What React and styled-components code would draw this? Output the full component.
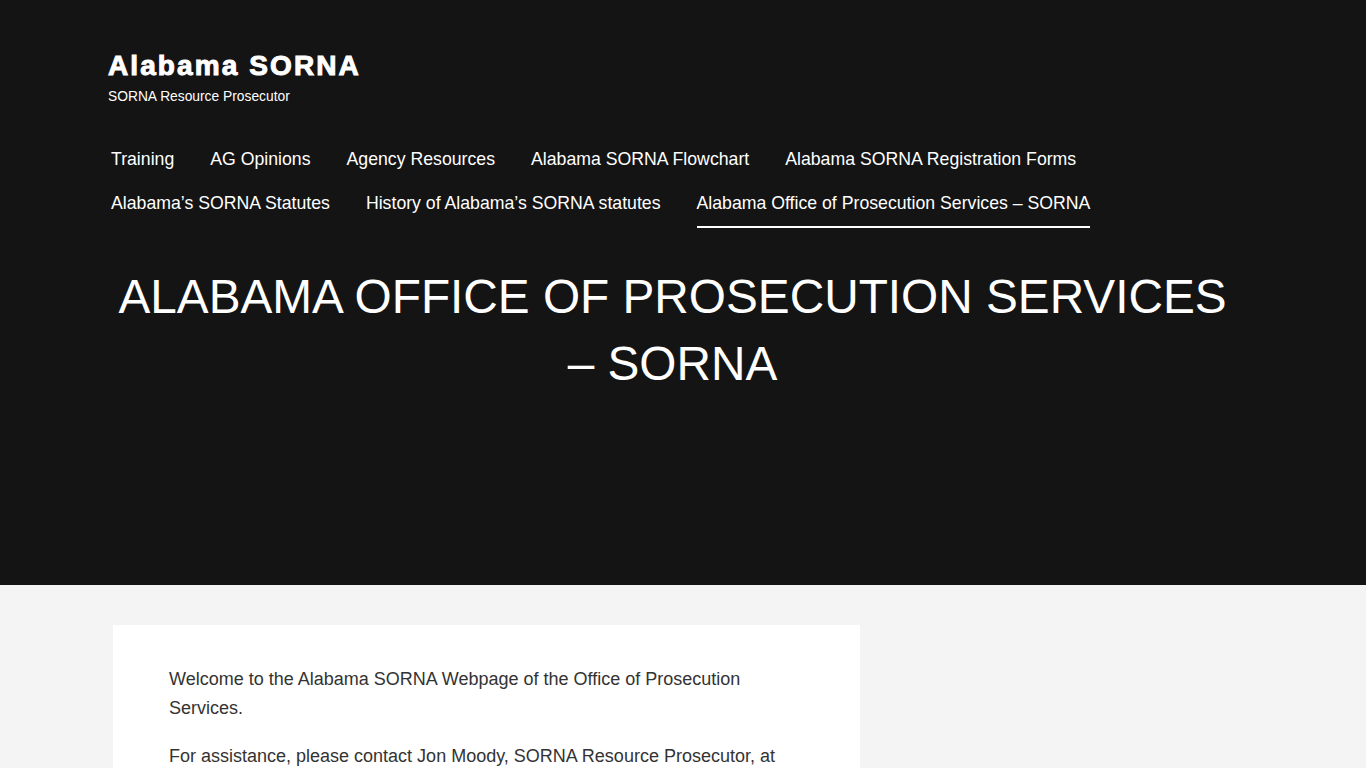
import React from "react";
import styled, { createGlobalStyle } from "styled-components";

const navItems = [
  "Training",
  "AG Opinions",
  "Agency Resources",
  "Alabama SORNA Flowchart",
  "Alabama SORNA Registration Forms",
  "Alabama’s SORNA Statutes",
  "History of Alabama’s SORNA statutes",
  "Alabama Office of Prosecution Services – SORNA",
];

const App = () => {
  return (
    <>
      <GlobalStyle />
      <Header>
        <HeaderInner>
          <Branding>
            <SiteTitle>Alabama SORNA</SiteTitle>
            <Tagline>SORNA Resource Prosecutor</Tagline>
          </Branding>
          <Nav>
            {navItems.map((item, i) => (
              <NavLink key={item} current={i === navItems.length - 1}>
                {item}
              </NavLink>
            ))}
          </Nav>
          <PageTitle>
            Alabama Office of Prosecution Services – SORNA
          </PageTitle>
        </HeaderInner>
      </Header>
      <Main>
        <Card>
          <Para>
            Welcome to the Alabama SORNA Webpage of the Office of Prosecution
            Services.
          </Para>
          <Para>
            For assistance, please contact Jon Moody, SORNA Resource
            Prosecutor, at (334) 242-4191 or by email.
          </Para>
        </Card>
      </Main>
    </>
  );
};
export default App;

const GlobalStyle = createGlobalStyle`
  html, body {
    margin: 0;
    padding: 0;
    background: #f4f4f4;
    font-family: "Liberation Sans", Arial, sans-serif;
  }
`;

const Header = styled.header`
  background-color: #141414;
  color: #fff;
`;

const HeaderInner = styled.div`
  width: 1130px;
  margin-left: 108px;
  padding: 49px 0 188px;
`;

const Branding = styled.div`
  display: flex;
  flex-direction: column;
`;

const SiteTitle = styled.div`
  font-size: 28px;
  line-height: 1.2;
  font-weight: 700;
  letter-spacing: 2.1px;
  -webkit-text-stroke: 1px #fff;
`;

const Tagline = styled.div`
  margin-top: 4px;
  font-size: 13.8px;
  line-height: 19px;
`;

const Nav = styled.nav`
  display: flex;
  flex-wrap: wrap;
  row-gap: 6px;
  column-gap: 36px;
  margin-top: 40px;
  padding-left: 3px;
`;

const NavLink = styled.a`
  font-size: 17.7px;
  line-height: 27px;
  color: #fff;
  padding-bottom: 9px;
  border-bottom: 2px solid ${props => (props.current ? "#fff" : "transparent")};
  cursor: pointer;
`;

const PageTitle = styled.h1`
  margin: 35px 0 0 -1px;
  font-size: 47.75px;
  line-height: 67px;
  font-weight: 400;
  text-transform: uppercase;
  text-align: center;
`;

const Main = styled.main`
  padding: 40px 0 60px 113px;
`;

const Card = styled.article`
  width: 747px;
  box-sizing: border-box;
  background: #fff;
  padding: 40px 56px 40px;
`;

const Para = styled.p`
  margin: 0 0 19px;
  font-size: 18px;
  line-height: 29px;
  color: #333;
`;
